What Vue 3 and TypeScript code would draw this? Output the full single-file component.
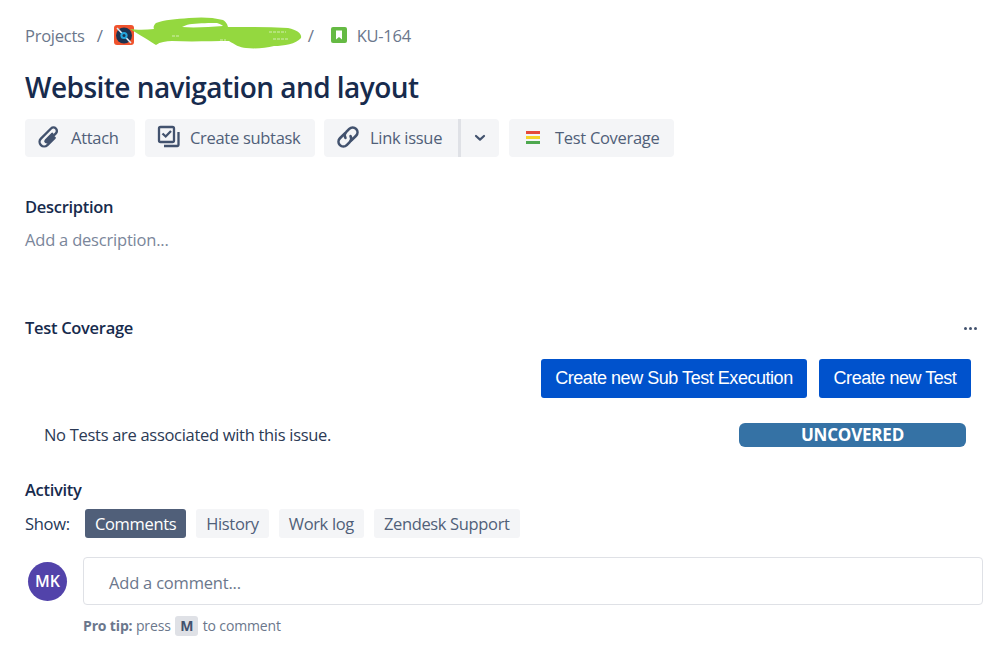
<template>
  <div class="page">
    <nav class="crumbs">
      <span>Projects</span>
      <span class="sep">/</span>
      <svg class="project-icon" width="20" height="20" viewBox="0 0 20 20">
        <rect width="20" height="20" rx="3" fill="#f0532d" />
        <circle cx="10" cy="10.5" r="8" fill="#1d3350" />
        <path d="M3 3l14 15" stroke="#dcebf5" stroke-width="1.6" />
        <circle cx="10" cy="10.5" r="3.6" fill="#23a6dc" />
        <circle cx="10" cy="10.5" r="1.5" fill="#1d3350" />
      </svg>
      <span class="hidden-name">
        <svg class="scribble" width="180" height="38" viewBox="0 0 180 38">
          <path
            fill-rule="evenodd"
            d="M4 15C14 21 24 27 30 31C34 28 40 27 46 27C66 28 86 27 103 27C108 30 114 34 120 34C130 35 140 34 148 32C158 32 170 30 175 24C176 20 172 16 162 14C142 13 122 13 102 13C101 9 99 7 97 6C86 3 74 3 63 4C50 5 38 6 30 9C28 11 27 13 28 15C20 16 10 16 4 15ZM56 13C60 11 63 10 66 10C74 9 84 9 91 9C94 10 96 11 97 12C84 13 68 14 56 13Z"
            fill="#94d83f"
          />
          <path d="M143 18h17M147 25h16M94 26h6M46 22h7" stroke="#eef6e2" stroke-width="1.2" stroke-dasharray="3 1" stroke-opacity="0.7" fill="none" />
        </svg>
      </span>
      <span class="sep last">/</span>
      <svg class="story-icon" width="16" height="16" viewBox="0 0 16 16">
        <rect width="16" height="16" rx="2" fill="#65ba43" />
        <path d="M5 3.5h6v9l-3-2.4-3 2.4z" fill="#fff" />
      </svg>
      <span>KU-164</span>
    </nav>

    <h1>Website navigation and layout</h1>

    <div class="actions">
      <button class="tool attach">
        <svg width="24" height="24" viewBox="1.5 1.5 21 21" fill="none" stroke="#42526e" stroke-width="2.1" stroke-linecap="round">
          <path transform="rotate(45 12 12)" d="M16 9V18a4 4 0 0 1-8 0V5.5a3 3 0 0 1 6 0V16a1 1 0 0 1-2 0V8" />
        </svg>
        <span>Attach</span>
      </button>
      <button class="tool subtask">
        <svg width="24" height="24" viewBox="0 0 24 24" fill="none" stroke="#42526e" stroke-width="2.3">
          <rect x="2" y="2" width="15" height="15" rx="1.5" />
          <path d="M5.5 8.5l3.2 3L14 6" />
          <path d="M21.5 7v13a1 1 0 0 1-1 1H7" />
        </svg>
        <span>Create subtask</span>
      </button>
      <div class="split">
        <button class="tool link-main">
          <svg width="24" height="24" viewBox="2 2 20 20" fill="none" stroke="#42526e" stroke-width="2.2" stroke-linecap="round">
            <g transform="rotate(-45 12 12)">
              <path d="M12 8H6.5a4 4 0 0 0 0 8H10a4 4 0 0 0 4-3" />
              <path d="M12 16h5.5a4 4 0 0 0 0-8H14a4 4 0 0 0-4 3" />
            </g>
          </svg>
          <span>Link issue</span>
        </button>
        <button class="tool link-more">
          <svg width="12" height="8" viewBox="0 0 12 8" fill="none" stroke="#42526e" stroke-width="2.2" stroke-linecap="round" stroke-linejoin="round">
            <path d="M2 2l4 3.6L10 2" />
          </svg>
        </button>
      </div>
      <button class="tool coverage">
        <span class="bars"><i class="red"></i><i class="yellow"></i><i class="green"></i></span>
        <span>Test Coverage</span>
      </button>
    </div>

    <h2 class="desc-title">Description</h2>
    <p class="desc">Add a description...</p>

    <div class="cov-head">
      <h2>Test Coverage</h2>
      <span class="dots"><i></i><i></i><i></i></span>
    </div>
    <div class="cov-buttons">
      <button class="primary sub">Create new Sub Test Execution</button>
      <button class="primary">Create new Test</button>
    </div>
    <div class="cov-status">
      <span class="no-tests">No Tests are associated with this issue.</span>
      <span class="badge">UNCOVERED</span>
    </div>

    <h2 class="act-title">Activity</h2>
    <div class="tabs">
      <span class="show">Show:</span>
      <button
        v-for="tab in tabs"
        :key="tab"
        class="tab"
        :class="{ active: tab === activeTab }"
      >{{ tab }}</button>
    </div>

    <div class="comment">
      <div class="avatar">MK</div>
      <div class="comment-main">
        <div class="comment-input">Add a comment...</div>
        <div class="tip"><b>Pro tip:</b> press <kbd>M</kbd> to comment</div>
      </div>
    </div>
  </div>
</template>

<script setup lang="ts">
const tabs = ['Comments', 'History', 'Work log', 'Zendesk Support']
const activeTab = 'Comments'
</script>

<style>
html,
body {
  margin: 0;
  background: #fff;
}
</style>

<style scoped>
.page {
  width: 999px;
  height: 659px;
  box-sizing: border-box;
  padding: 24px 16px 0 25px;
  overflow: hidden;
  font-family: "Open Sans", "Noto Sans", sans-serif;
  font-size: 16.5px;
  color: #172b4d;
}

.crumbs {
  display: flex;
  align-items: center;
  height: 22px;
  font-size: 16.5px;
  letter-spacing: -0.25px;
  color: #6b778c;
}

.sep {
  margin: 0 11px 0 12px;
  font-size: 17px;
}

.sep.last {
  margin-right: 17px;
}

.project-icon {
  flex: none;
}

.hidden-name {
  position: relative;
  display: block;
  width: 162px;
  height: 22px;
}

.scribble {
  position: absolute;
  left: -8px;
  top: -10px;
}

.story-icon {
  flex: none;
  margin-right: 10px;
}

h1 {
  margin: 21px 0 0;
  font-size: 28px;
  line-height: 40px;
  font-weight: 600;
  letter-spacing: -0.54px;
}

.actions {
  display: flex;
  gap: 9px;
  margin-top: 12px;
}

button {
  font-family: inherit;
  border: 0;
  padding: 0;
}

.tool {
  display: flex;
  align-items: center;
  height: 38px;
  padding: 0 14px 2px 12px;
  gap: 10px;
  background: #f4f5f7;
  border-radius: 4px;
  font-size: 16.5px;
  letter-spacing: -0.3px;
  color: #505f79;
}

.attach {
  width: 110px;
  margin-right: 1px;
}

.subtask {
  gap: 9px;
  width: 170px;
}

.split {
  display: flex;
}

.link-main {
  width: 137px;
  padding-right: 0;
  border-radius: 4px 0 0 4px;
  border-right: 3px solid #dfe1e6;
}

.link-more {
  width: 38px;
  padding: 0;
  justify-content: center;
  border-radius: 0 4px 4px 0;
}

.coverage {
  margin-left: 1px;
  padding-left: 17px;
  gap: 15px;
  width: 165px;
}

.bars {
  display: flex;
  flex-direction: column;
  gap: 2px;
  width: 14px;
}

.bars i {
  display: block;
  height: 3px;
}

.red {
  background: #e5493a;
}

.yellow {
  background: #f5d328;
}

.green {
  background: #4ea84f;
}

h2 {
  margin: 0;
  font-size: 16.5px;
  font-weight: 600;
  letter-spacing: -0.3px;
  line-height: 22px;
}

.desc-title {
  margin-top: 39px;
}

.desc {
  margin: 11px 0 0;
  font-size: 16.5px;
  line-height: 22px;
  letter-spacing: -0.2px;
  color: #7a869a;
}

.cov-head {
  display: flex;
  align-items: center;
  justify-content: space-between;
  margin-top: 66px;
  padding-right: 6px;
}

.dots {
  display: flex;
  gap: 2px;
}

.dots i {
  display: block;
  width: 3px;
  height: 3px;
  border-radius: 50%;
  background: #42526e;
}

.cov-buttons {
  display: flex;
  justify-content: flex-end;
  gap: 12px;
  margin-top: 20px;
  padding-right: 12px;
}

.primary {
  width: 152px;
  height: 39px;
  box-sizing: border-box;
  background: #0052cc;
  color: #fff;
  border-radius: 3px;
  font-family: "Liberation Sans", Arial, sans-serif;
  font-size: 18px;
  letter-spacing: -0.46px;
}

.primary.sub {
  width: 266px;
}

.cov-status {
  display: flex;
  justify-content: space-between;
  align-items: center;
  margin-top: 25px;
  padding: 0 17px 0 19px;
  font-size: 16.5px;
  letter-spacing: -0.3px;
  color: #2b3a55;
}

.no-tests {
  padding-bottom: 1px;
}

.badge {
  width: 227px;
  height: 24px;
  line-height: 23px;
  text-align: center;
  background: #3572a5;
  border-radius: 6px;
  color: #fff;
  font-weight: 700;
  font-size: 17px;
  letter-spacing: -0.2px;
}

.act-title {
  margin-top: 32px;
}

.tabs {
  display: flex;
  align-items: center;
  gap: 10px;
  margin-top: 8px;
}

.show {
  width: 50px;
  font-size: 16.5px;
  letter-spacing: -0.3px;
  color: #253858;
}

.tab {
  height: 29px;
  padding: 0 10px;
  background: #f4f5f7;
  border-radius: 3px;
  font-size: 16.5px;
  letter-spacing: -0.35px;
  color: #505f79;
}

.tab.active {
  background: #505f79;
  color: #fff;
}

.comment {
  display: flex;
  gap: 16px;
  margin-top: 19px;
  padding-left: 3px;
}

.avatar {
  flex: none;
  width: 39px;
  height: 39px;
  margin-top: 5px;
  border-radius: 50%;
  background: #5243aa;
  color: #fff;
  font-size: 16px;
  font-weight: 600;
  line-height: 39px;
  text-align: center;
}

.comment-main {
  flex: 1;
}

.comment-input {
  height: 48px;
  box-sizing: border-box;
  padding-left: 25px;
  border: 1px solid #dfe1e6;
  border-radius: 4px;
  line-height: 50px;
  font-size: 16.5px;
  letter-spacing: -0.2px;
  color: #6b778c;
}

.tip {
  margin-top: 11px;
  font-size: 14px;
  letter-spacing: -0.15px;
  line-height: 20px;
  color: #6b778c;
}

.tip kbd {
  display: inline-block;
  padding: 0 5px;
  margin: 0 1px;
  background: #dfe1e6;
  border-radius: 3px;
  font-family: inherit;
  font-weight: 700;
  color: #42526e;
}
</style>
